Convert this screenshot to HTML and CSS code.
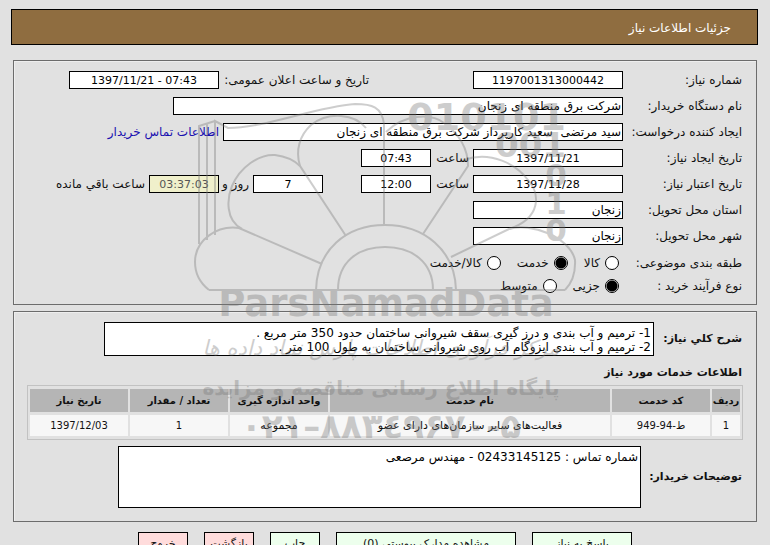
FILE: index.html
```html
<!DOCTYPE html>
<html lang="fa" dir="rtl">
<head>
<meta charset="utf-8">
<title>جزئیات اطلاعات نیاز</title>
<link rel="stylesheet" href="styles.css">
</head>
<body>
<header class="title-bar"><h1>جزئیات اطلاعات نیاز</h1></header>
<main>
<section class="panel details">
  <div class="row">
    <label class="name" for="number">شماره نیاز:</label>
    <input class="field mid center" id="number" value="1197001313000442" readonly>
    <label class="announce" for="announce">تاریخ و ساعت اعلان عمومی:</label>
    <input class="field mid center" id="announce" dir="ltr" value="1397/11/21 - 07:43" readonly>
  </div>
  <div class="row">
    <label class="name" for="buyer">نام دستگاه خریدار:</label>
    <input class="field widest" id="buyer" value="شرکت برق منطقه ای زنجان" readonly>
  </div>
  <div class="row">
    <label class="name" for="creator">ایجاد کننده درخواست:</label>
    <input class="field wide" id="creator" value="سید مرتضی  سعید کارپرداز شرکت برق منطقه ای زنجان" readonly>
    <a href="#contact">اطلاعات تماس خریدار</a>
  </div>
  <div class="row">
    <label class="name" for="made">تاریخ ایجاد نیاز:</label>
    <input class="field mid center" id="made" value="1397/11/21" readonly>
    <label class="hour" for="made-time">ساعت</label>
    <input class="field short center" id="made-time" value="07:43" readonly>
  </div>
  <div class="row">
    <label class="name" for="valid">تاریخ اعتبار نیاز:</label>
    <input class="field mid center" id="valid" value="1397/11/28" readonly>
    <label class="hour" for="valid-time">ساعت</label>
    <input class="field short center" id="valid-time" value="12:00" readonly>
    <input class="field short center days" id="days" value="7" readonly>
    <label class="and" for="days">روز و</label>
    <input class="field short center timer" id="timer" value="03:37:03" readonly>
    <label for="timer">ساعت باقي مانده</label>
  </div>
  <div class="row">
    <label class="name" for="province">استان محل تحویل:</label>
    <input class="field mid" id="province" value="زنجان" readonly>
  </div>
  <div class="row">
    <label class="name" for="city">شهر محل تحویل:</label>
    <input class="field mid" id="city" value="زنجان" readonly>
  </div>
  <div class="row choices" role="radiogroup" aria-labelledby="kind-name">
    <span class="name" id="kind-name">طبقه بندی موضوعی:</span>
    <label class="choice"><input type="radio" name="kind">کالا</label>
    <label class="choice"><input type="radio" name="kind" checked>خدمت</label>
    <label class="choice"><input type="radio" name="kind">کالا/خدمت</label>
  </div>
  <div class="row choices last" role="radiogroup" aria-labelledby="process-name">
    <span class="name" id="process-name">نوع فرآیند خرید :</span>
    <label class="choice"><input type="radio" name="process" checked>جزیی</label>
    <label class="choice"><input type="radio" name="process">متوسط</label>
  </div>
</section>

<section class="panel services">
  <div class="row">
    <label class="strong summary-name" for="summary">شرح كلي نياز:</label>
    <textarea class="field area summary" id="summary" readonly>1- ترمیم و آب بندی و درز گیری سقف شیروانی ساختمان حدود 350 متر مربع .
2- ترمیم و آب بندی ایزوگام آب روی شیروانی ساختمان به طول 100 متر .</textarea>
  </div>
  <h2>اطلاعات خدمات مورد نیاز</h2>
  <table>
    <colgroup><col class="c-index"><col class="c-mid"><col><col class="c-mid"><col class="c-mid"><col class="c-mid"></colgroup>
    <thead><tr><th>ردیف</th><th>کد خدمت</th><th>نام خدمت</th><th>واحد اندازه گیری</th><th>تعداد / مقدار</th><th>تاریخ نیاز</th></tr></thead>
    <tbody><tr><td>1</td><td>ط-94-949</td><td class="words">فعالیت‌های سایر سازمان‌های دارای عضو</td><td class="words">مجموعه</td><td>1</td><td>1397/12/03</td></tr></tbody>
  </table>
  <div class="row">
    <label class="strong notes-name" for="notes">توضیحات خریدار:</label>
    <textarea class="field area notes" id="notes" readonly>شماره تماس : 02433145125 - مهندس مرصعی</textarea>
  </div>
</section>

<div class="actions">
  <button class="go reply" type="button">پاسخ به نیاز</button>
  <button class="go files" type="button">مشاهده مدارک پیوستی (0)</button>
  <button class="go" type="button">چاپ</button>
  <button class="leave" type="button">بازگشت</button>
  <button class="leave" type="button">خروج</button>
</div>

<svg class="watermark" viewBox="0 0 400 360" width="400" height="360" direction="ltr" aria-hidden="true">
  <g fill="none" stroke="currentColor" stroke-width="2">
    <path d="M29 200H385"/>
    <path d="M136 200C137 160 166 135 205 135S275 160 276 200M158 200C158 172 178 157 205 157S253 172 253 200"/>
    <path d="M142 174L59 138C37 135 15 150 15 172Q15 189 29 200"/>
    <path d="M62 139C45 130 47 108 52 96C60 77 79 64 95 65Q111 67 120 76L166 146"/>
    <path d="M120 76C115 60 120 45 131 35C149 21 175 24 186 38"/>
    <path d="M204 135V34C202 17 192 14 175 14C135 17 85 38 48 38L35 31V145M35 31L19 36V154M27 33V150"/>
    <path d="M206 42C224 24 251 23 264 33C279 44 288 57 288 76L243 144M284 70C311 60 337 75 348 90C360 103 362 128 329 139L271 167"/>
    <path d="M329 139C350 132 390 147 395 170Q396 189 385 200"/>
  </g>
  <g class="mark-latin">
    <text x="386" y="40" font-size="38" text-anchor="end">010101</text>
    <text x="386" y="67" font-size="34" text-anchor="end">001</text>
    <text x="376" y="96" font-size="31" text-anchor="middle">0</text>
    <text x="376" y="124" font-size="31" text-anchor="middle">1</text>
    <text x="376" y="151" font-size="31" text-anchor="middle">0</text>
    <text x="206" y="226" font-size="37" text-anchor="middle">ParsNamadData</text>
  </g>
  <g class="mark-farsi" text-anchor="middle">
    <text x="201" y="265" font-size="21" font-style="italic">مرکز فرآوری اطلاعات پارس نماد داده ها</text>
    <text x="201" y="305" font-size="20" font-weight="bold">پایگاه اطلاع رسانی مناقصه و مزایده</text>
    <text class="phone" x="201" y="348" font-size="34" font-weight="bold">۰۲۱–۸۸۳٤۹۶۷۰-۵</text>
  </g>
</svg>
</main>
</body>
</html>
```
FILE: styles.css
```css
* { box-sizing: border-box; }
body {
  margin: 0;
  height: 100vh;
  overflow: hidden;
  background: #e1e1e1;
  color: #111;
  font: 12px/16px "DejaVu Sans", sans-serif;
}
main { position: relative; }
.title-bar {
  margin: 9px 12px 15px 11px;
  padding: 10px 26px 8px;
  border: 1px solid #000;
  background: #8f6d40;
  color: #fff;
}
h1 { margin: 0; font-size: 12px; line-height: 16px; font-weight: normal; }
.panel {
  margin: 0 13px 6px;
  border: 1px solid #6c6c6c;
  box-shadow: inset 1px 1px #eee;
}
.details { padding: 10px 14px 9px; }
.row { display: flex; align-items: center; gap: 4px; }
.details .row { margin-bottom: 8px; height: 18px; white-space: nowrap; }
.name { flex: 0 0 115px; }
.field {
  margin: 0;
  padding: 0 1px;
  height: 18px;
  border: 1px solid #000;
  border-radius: 0;
  background: #fff;
  color: #000;
  font: inherit;
}
.center { text-align: center; font-size: 11px; }
.short { width: 70px; }
.mid { width: 150px; }
.wide { width: 400px; }
.widest { width: 450px; }
.announce { width: 146px; margin-inline-start: 100px; }
.hour { width: 34px; }
.days { margin-inline-start: 34px; }
.and { width: 26px; }
.timer { background: #f0f0cb; color: #555; }
a { color: #1a10b0; text-decoration: none; }
.details .choices { gap: 16px; margin: 9px 0 5px; }
.details .choices.last { margin: 0; }
.choices .name { margin-inline-end: -8px; }
.choice { display: flex; align-items: center; gap: 5px; }
.choice input {
  appearance: none;
  margin: 0;
  width: 14px;
  height: 14px;
  border: 1px solid #000;
  border-radius: 50%;
  background: #fff;
}
.choice input:checked { background: radial-gradient(circle, #000 5px, #fff 6px); }
.services { padding: 10px 13px 13px; }
.services .row { padding-inline-start: 1px; }
.strong, h2 { font-size: 11px; font-weight: bold; white-space: nowrap; }
.area {
  flex: 1;
  display: block;
  resize: none;
  overflow: hidden;
  line-height: 14px;
  padding: 3px 2px;
}
.summary-name { flex: 0 0 84px; }
.summary { height: 34px; margin-inline-end: 77px; }
.notes-name { flex: 0 0 97px; }
.notes { height: 62px; margin-inline-end: 91px; }
h2 { margin: 9px 1px 4px; line-height: 16px; }
table {
  width: 100%;
  margin-bottom: 6px;
  table-layout: fixed;
  border: 1px solid #c2c2c2;
  border-spacing: 2px 3px;
  font-size: 10px;
  line-height: 16px;
}
.c-index { width: 28px; }
.c-mid { width: 98px; }
th, td { padding: 0; height: 23px; white-space: nowrap; text-align: center; }
th { background: #b5b5b5; }
td { height: 21px; background: #f7f7f7; }
.words { font-size: 11px; }
.actions { display: flex; justify-content: center; gap: 16px; margin-top: 10px; }
button {
  width: 50px;
  height: 24px;
  padding: 0;
  border: 1px solid #000;
  font: inherit;
  font-size: 11px;
  color: #111;
  white-space: nowrap;
}
.go { background: #edffed; }
.leave { background: #ffdcdc; }
.reply { width: 100px; }
.files { width: 180px; }
.watermark {
  position: absolute;
  top: 30px;
  left: 180px;
  color: #777;
  opacity: .36;
  pointer-events: none;
}
.mark-latin { fill: currentColor; font-family: "DejaVu Sans", sans-serif; font-weight: bold; }
.mark-farsi { fill: currentColor; font-family: "DejaVu Sans", sans-serif; direction: rtl; }
.mark-farsi .phone { direction: ltr; unicode-bidi: bidi-override; }
```
